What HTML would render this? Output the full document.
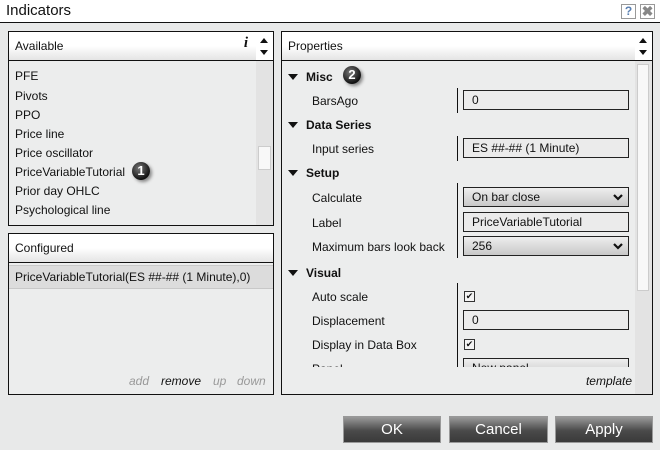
<!DOCTYPE html><html><head><style>
*{box-sizing:border-box;margin:0;padding:0}
body{width:660px;height:450px;background:#e8e9e9;font-family:"Liberation Sans",sans-serif;font-size:12px;color:#111;position:relative;overflow:hidden}
.a{position:absolute}
.panel{position:absolute;border:1px solid #111;background:#eceded}
.hdr{position:absolute;left:0;right:0;top:0;height:29px;background:linear-gradient(#fff 0%,#fff 50%,#e4e4e4 100%);border-bottom:1px solid #111;padding:7px 0 0 6px}
.t{position:absolute;white-space:nowrap}
.b{font-weight:bold}
.tri{position:absolute;width:0;height:0;border-left:5px solid transparent;border-right:5px solid transparent;border-top:6px solid #111}
.box{position:absolute;left:463px;width:166px;height:20px;border:1px solid #222;background:#ebebeb;padding:2px 0 0 8px}
.sel{background:linear-gradient(#eee,#c8c8c8)}
.chev{position:absolute;right:5px;top:6px}
.vl{position:absolute;left:457px;width:1px;background:#111}
.cb{position:absolute;left:464px;width:11px;height:11px;border:1px solid #333;background:#f4f4f4;font-size:9px;line-height:9px;text-align:center}
.btn{position:absolute;top:416px;height:27px;border:1px solid #999;background:linear-gradient(#9a9a9a,#4a4a4a 55%,#3a3a3a);color:#fff;font-size:15px;text-align:center;padding-top:4px}
.badge{position:absolute;width:18px;height:18px;border-radius:50%;background:radial-gradient(circle at 40% 35%,#777,#111 70%);color:#fff;font-weight:bold;font-size:13px;text-align:center;line-height:18px;box-shadow:2px 2px 3px #888}
.sb{position:absolute;right:0;top:0;width:17px;height:29px;background:#fff;border-bottom:1px solid #111}
.up{position:absolute;left:4px;top:6px;border-left:4px solid transparent;border-right:4px solid transparent;border-bottom:5px solid #111}
.dn{position:absolute;left:4px;top:18px;border-left:4px solid transparent;border-right:4px solid transparent;border-top:5px solid #111}
</style></head><body>
<div class="a" style="left:0;top:0;width:660px;height:23px;background:#fff;border-bottom:1px solid #111"></div>
<div class="t" style="left:6px;top:2px;font-size:15px">Indicators</div>
<div class="a" style="left:621px;top:4px;width:15px;height:15px;border:1px solid #999;color:#5a7fb0;font-weight:bold;font-size:12px;text-align:center;line-height:13px">?</div>
<div class="a" style="left:640px;top:4px;width:15px;height:15px;border:1px solid #999;color:#888;font-weight:bold;font-size:14px;text-align:center;line-height:13px">✖</div>

<div class="panel" style="left:8px;top:31px;width:266px;height:195px">
<div class="hdr" style="right:17px">Available<span class="t" style="right:8px;top:3px;font-style:italic;font-weight:bold;font-family:'Liberation Serif',serif;font-size:15px">i</span></div>
<div class="sb"><div class="up"></div><div class="dn"></div></div>
<div class="a" style="right:0;top:29px;width:17px;bottom:0;background:#e3e3e3"></div>
<div class="a" style="right:2px;top:114px;width:13px;height:24px;background:#f8f8f8;border:1px solid #ccc"></div>
<div class="t" style="left:6px;top:37px">PFE</div>
<div class="t" style="left:6px;top:57px">Pivots</div>
<div class="t" style="left:6px;top:76px">PPO</div>
<div class="t" style="left:6px;top:95px">Price line</div>
<div class="t" style="left:6px;top:114px">Price oscillator</div>
<div class="t" style="left:6px;top:133px">PriceVariableTutorial</div>
<div class="t" style="left:6px;top:152px">Prior day OHLC</div>
<div class="t" style="left:6px;top:171px">Psychological line</div>
</div>
<div class="badge" style="left:132px;top:162px">1</div>

<div class="panel" style="left:8px;top:233px;width:266px;height:162px">
<div class="hdr">Configured</div>
<div class="a" style="left:0;right:0;top:31px;height:24px;background:#dcdcdc;border-top:1px solid #c8c8c8;border-bottom:1px solid #c8c8c8"></div>
<div class="t" style="left:6px;top:36px">PriceVariableTutorial(ES ##-## (1 Minute),0)</div>
<div class="t" style="left:120px;top:140px;font-style:italic;color:#999">add</div>
<div class="t" style="left:152px;top:140px;font-style:italic;color:#111">remove</div>
<div class="t" style="left:204px;top:140px;font-style:italic;color:#999">up</div>
<div class="t" style="left:228px;top:140px;font-style:italic;color:#999">down</div>
</div>

<div class="panel" style="left:281px;top:31px;width:372px;height:364px">
<div class="hdr" style="right:17px">Properties</div>
<div class="sb"><div class="up"></div><div class="dn"></div></div>
<div class="a" style="right:0;top:29px;width:17px;bottom:0;background:#e3e3e3"></div>
<div class="a" style="right:3px;top:32px;width:12px;height:227px;background:#f8f8f8;border:1px solid #ccc"></div>
<div class="t" style="right:20px;top:342px;font-style:italic">template</div>
</div>
<div class="badge" style="left:343px;top:66px">2</div>

<div class="tri" style="left:288px;top:74px"></div><div class="t b" style="left:306px;top:70px">Misc</div>
<div class="vl" style="top:88px;height:25px"></div><div class="t" style="left:312px;top:94px">BarsAgo</div><div class="box" style="top:90px">0</div>
<div class="tri" style="left:288px;top:122px"></div><div class="t b" style="left:306px;top:118px">Data Series</div>
<div class="vl" style="top:136px;height:25px"></div><div class="t" style="left:312px;top:142px">Input series</div><div class="box" style="top:138px">ES ##-## (1 Minute)</div>
<div class="tri" style="left:288px;top:170px"></div><div class="t b" style="left:306px;top:166px">Setup</div>
<div class="vl" style="top:183px;height:75px"></div>
<div class="t" style="left:312px;top:191px">Calculate</div><div class="box sel" style="top:187px">On bar close<svg class="chev" width="10" height="7" viewBox="0 0 10 7"><path d="M1 1L5 5L9 1" stroke="#111" stroke-width="2.2" fill="none"/></svg></div>
<div class="t" style="left:312px;top:216px">Label</div><div class="box" style="top:212px">PriceVariableTutorial</div>
<div class="t" style="left:312px;top:240px">Maximum bars look back</div><div class="box sel" style="top:236px">256<svg class="chev" width="10" height="7" viewBox="0 0 10 7"><path d="M1 1L5 5L9 1" stroke="#111" stroke-width="2.2" fill="none"/></svg></div>
<div class="tri" style="left:288px;top:270px"></div><div class="t b" style="left:306px;top:266px">Visual</div>
<div class="vl" style="top:283px;height:84px"></div>
<div class="t" style="left:312px;top:290px">Auto scale</div><div class="cb" style="top:291px">✔</div>
<div class="t" style="left:312px;top:314px">Displacement</div><div class="box" style="top:310px">0</div>
<div class="t" style="left:312px;top:338px">Display in Data Box</div><div class="cb" style="top:339px">✔</div>
<div class="a" style="left:300px;top:358px;width:335px;height:9px;overflow:hidden"><div class="t" style="left:12px;top:4px">Panel</div><div class="box sel" style="left:163px;top:0;height:20px">New panel</div></div>

<div class="btn" style="left:343px;width:98px">OK</div>
<div class="btn" style="left:449px;width:99px">Cancel</div>
<div class="btn" style="left:555px;width:98px">Apply</div>
</body></html>
